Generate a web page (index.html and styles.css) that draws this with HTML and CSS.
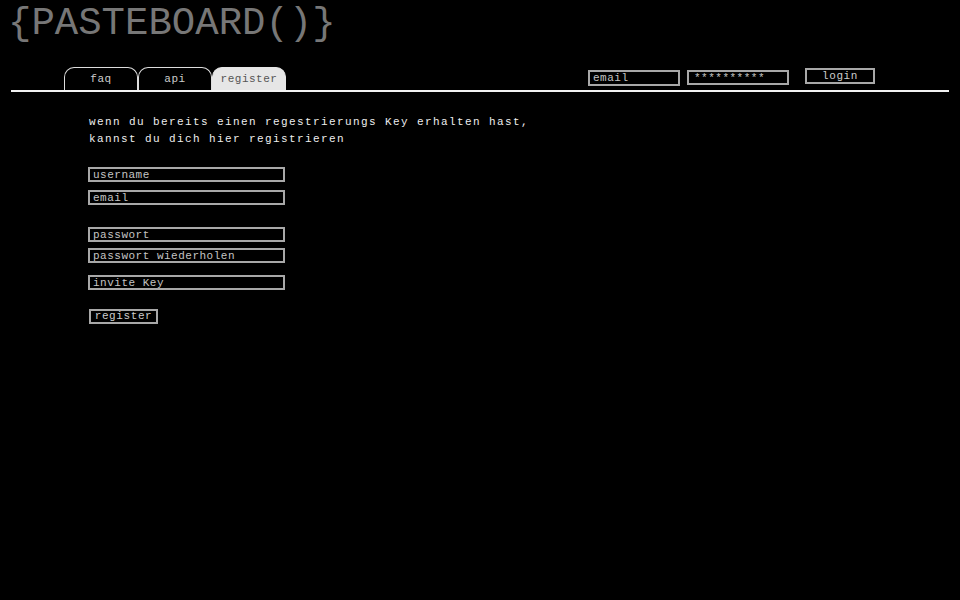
FILE: index.html
```html
<!DOCTYPE html>
<html lang="de">
<head>
<meta charset="utf-8">
<title>PASTEBOARD</title>
<link rel="stylesheet" href="styles.css">
</head>
<body>
<h1 class="logo">{PASTEBOARD()}</h1>
<nav class="bar">
  <ul class="tabs">
    <li class="tab">faq</li>
    <li class="tab">api</li>
    <li class="tab tab-active">register</li>
  </ul>
  <form class="login">
    <input class="field login-email" type="text" placeholder="email">
    <input class="field login-pass" type="text" placeholder="**********">
    <button class="btn login-btn" type="button">login</button>
  </form>
</nav>
<main class="content">
  <p class="intro">wenn du bereits einen regestrierungs Key erhalten hast,<br>kannst du dich hier registrieren</p>
  <form class="register">
    <input class="field reg-field" type="text" placeholder="username">
    <input class="field reg-field gap-8" type="text" placeholder="email">
    <input class="field reg-field gap-22" type="text" placeholder="passwort">
    <input class="field reg-field gap-6" type="text" placeholder="passwort wiederholen">
    <input class="field reg-field gap-12" type="text" placeholder="invite Key">
    <button class="btn reg-btn" type="button">register</button>
  </form>
</main>
</body>
</html>
```

FILE: styles.css
```css
html, body {
  margin: 0;
  padding: 0;
  background: #000;
}
body {
  font-family: "Courier New", "Nimbus Mono PS", "Nimbus Mono L", FreeMono, Courier, "Liberation Mono", monospace;
  color: #eee;
  font-size: 11px;
}
.logo {
  margin: 0;
  height: 48px;
  line-height: 48px;
  padding-left: 8px;
  font-size: 39px;
  font-weight: normal;
  color: #777;
  letter-spacing: 0;
}
.bar {
  margin: 19px 11px 0 11px;
  height: 23px;
  border-bottom: 2px solid #f2f2f2;
  display: flex;
  align-items: flex-start;
  padding-left: 53px;
}
.tabs {
  list-style: none;
  margin: 0;
  padding: 0;
  display: flex;
  height: 23px;
}
.tab {
  box-sizing: border-box;
  width: 74px;
  height: 23px;
  border: 1px solid #ddd;
  border-bottom: none;
  border-radius: 10px 10px 0 0;
  text-align: center;
  padding-top: 5px;
  letter-spacing: 0.5px;
  color: #ccc;
}
.tab-active {
  background: #e6e6e6;
  border-color: #e6e6e6;
  color: #555;
}
.login {
  display: flex;
  align-items: flex-start;
  margin-left: 302px;
  margin-top: 3px;
}
.field {
  box-sizing: border-box;
  background: #000;
  border: 2px solid #a8a8a8;
  font-family: inherit;
  font-size: 11px;
  letter-spacing: 0.5px;
  color: #ccc;
  padding: 0 0 0 3px;
  margin: 0;
  outline: none;
  line-height: 11px;
}
.field::placeholder {
  color: #c4c4c4;
  opacity: 1;
}
.login-email {
  width: 92px;
  height: 16px;
}
.login-pass {
  width: 102px;
  height: 15px;
  margin-left: 7px;
  padding-left: 5px;
}
.btn {
  box-sizing: border-box;
  background: #000;
  border: 2px solid #a8a8a8;
  color: #ccc;
  font-family: inherit;
  font-size: 11px;
  letter-spacing: 0.6px;
  padding: 0;
  margin: 0;
  line-height: 11px;
}
.login-btn {
  width: 70px;
  height: 16px;
  margin-left: 16px;
  margin-top: -2px;
}
.content {
  padding-left: 89px;
}
.intro {
  margin: 22px 0 0 0;
  line-height: 17px;
  letter-spacing: 1.4px;
  color: #eee;
}
.register {
  display: flex;
  flex-direction: column;
  align-items: flex-start;
  margin-top: 19px;
  margin-left: -1px;
}
.reg-field {
  width: 197px;
  height: 15px;
}
.gap-8 { margin-top: 8px; }
.gap-22 { margin-top: 22px; }
.gap-6 { margin-top: 6px; }
.gap-12 { margin-top: 12px; }
.reg-btn {
  width: 69px;
  height: 15px;
  margin-top: 19px;
  margin-left: 1px;
}
```
